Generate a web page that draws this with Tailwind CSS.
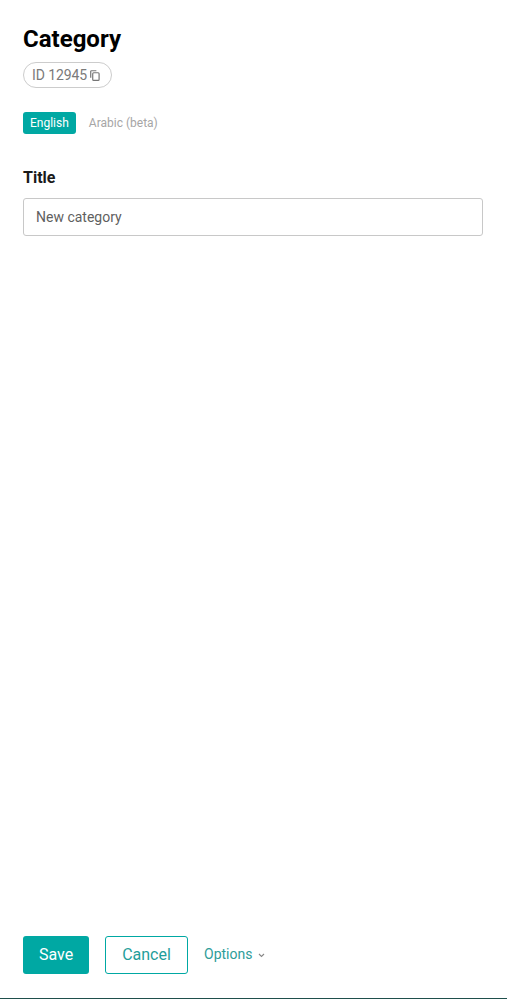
<!DOCTYPE html>
<html lang="en">
<head>
  <meta charset="UTF-8">
  <meta name="viewport" content="width=device-width, initial-scale=1.0">
  <title>Category</title>
  <script src="https://cdn.jsdelivr.net/npm/@tailwindcss/browser@4"></script>
</head>
<body class="bg-white font-['Roboto',sans-serif]">
  <div class="flex flex-col h-[999px] border-b border-[#1f4f4c] px-[23px]">
    <div class="flex-1">
      <h1 class="pt-[24px] text-[24px] leading-[30px] font-bold text-black">Category</h1>

      <div class="mt-[8px] inline-flex items-center h-[26px] pl-[8px] pr-[11px] border border-[#cccccc] rounded-full text-[14px] text-[#7a7a7a]">
        <span class="tracking-[-0.1px]">ID 12945</span>
        <svg class="ml-[3px] mt-[1px]" width="10" height="11" viewBox="0 0 11 12" fill="none" stroke="#757575" stroke-width="1.3">
          <path d="M7 .8H1.6a.8.8 0 0 0-.8.8v7"/>
          <rect x="3" y="3" width="7" height="8.4" rx="1"/>
        </svg>
      </div>

      <div class="flex items-center mt-[24px]">
        <button class="h-[22px] px-[7px] rounded-[3px] bg-[#00a8a3] text-white text-[12px] font-normal">English</button>
        <button class="ml-[6px] h-[22px] px-[7px] text-[#a6a6a6] text-[12px]">Arabic (beta)</button>
      </div>

      <label class="block mt-[32px] text-[16px] leading-[24px] font-bold text-[#1a1a1a]">Title</label>
      <input type="text" value="New category" class="block mt-[8px] w-[460px] h-[38px] px-[12px] border border-[#c8c8c8] rounded-[3px] text-[14px] text-[#5f5f5f] outline-none">
    </div>

    <div class="flex items-center pb-[24px]">
      <button class="w-[66px] h-[38px] rounded-[3px] bg-[#00a8a3] text-white text-[16px] font-normal">Save</button>
      <button class="ml-[16px] w-[83px] h-[38px] rounded-[3px] border border-[#00a8a3] text-[#1f9e9a] text-[16px]">Cancel</button>
      <button class="ml-[16px] mb-[1px] flex items-center text-[14px] text-[#2f9d99]">
        Options
        <svg class="ml-[6px] mt-[2px]" width="7" height="5" viewBox="0 0 7 5" fill="none" stroke="#888888" stroke-width="1.1"><path d="M1 1l2.5 2.5L6 1"/></svg>
      </button>
    </div>
  </div>
</body>
</html>
